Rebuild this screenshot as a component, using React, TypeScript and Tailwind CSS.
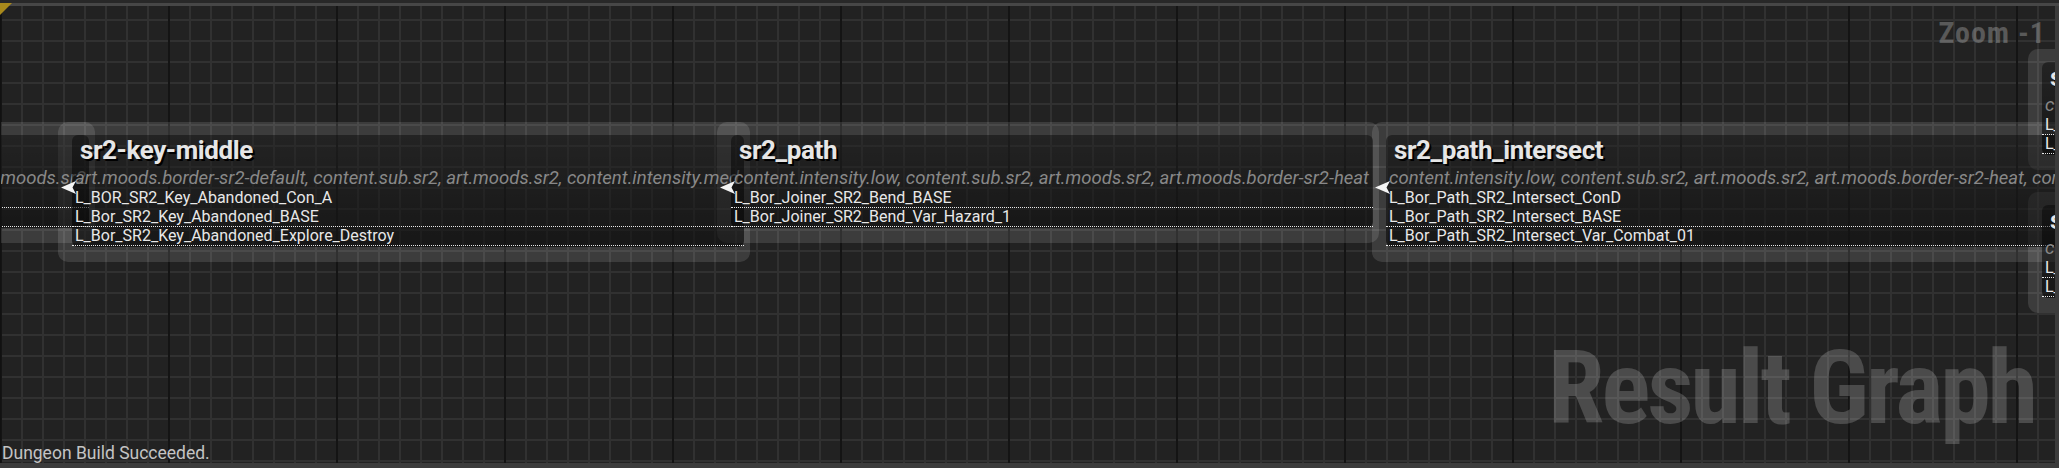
import React from "react";

type Item = { t: string; d: boolean };
type NodeData = {
  pos: string;
  title: string;
  subtitle: string;
  alignEnd?: boolean;
  pin: boolean;
  items: Item[];
};

const nodes: NodeData[] = [
  {
    pos: "left-[-401px] top-[116px] w-[495px]",
    title: "sr2-key-start",
    subtitle: "content.intensity.low, content.sub.sr2, art.moods.sr2",
    alignEnd: true,
    pin: true,
    items: [
      { t: "L_Bor_SR2_Key_Start", d: true },
      { t: "L_Bor_SR2_Key_Start_B", d: true },
    ],
  },
  {
    pos: "left-[57px] top-[116px] w-[692px]",
    title: "sr2-key-middle",
    subtitle:
      "art.moods.border-sr2-default, content.sub.sr2, art.moods.sr2, content.intensity.med",
    pin: true,
    items: [
      { t: "L_BOR_SR2_Key_Abandoned_Con_A", d: false },
      { t: "L_Bor_SR2_Key_Abandoned_BASE", d: true },
      { t: "L_Bor_SR2_Key_Abandoned_Explore_Destroy", d: true },
    ],
  },
  {
    pos: "left-[716px] top-[116px] w-[662px]",
    title: "sr2_path",
    subtitle:
      "content.intensity.low, content.sub.sr2, art.moods.sr2, art.moods.border-sr2-heat",
    pin: true,
    items: [
      { t: "L_Bor_Joiner_SR2_Bend_BASE", d: true },
      { t: "L_Bor_Joiner_SR2_Bend_Var_Hazard_1", d: true },
    ],
  },
  {
    pos: "left-[1371px] top-[116px] w-[800px]",
    title: "sr2_path_intersect",
    subtitle:
      "content.intensity.low, content.sub.sr2, art.moods.sr2, art.moods.border-sr2-heat, content.sub.sr2",
    pin: true,
    items: [
      { t: "L_Bor_Path_SR2_Intersect_ConD", d: false },
      { t: "L_Bor_Path_SR2_Intersect_BASE", d: true },
      { t: "L_Bor_Path_SR2_Intersect_Var_Combat_01", d: true },
    ],
  },
  {
    pos: "left-[2027px] top-[43px] w-[320px]",
    title: "sr2_path_bend",
    subtitle: "content.intensity.low, content.sub.sr2",
    pin: false,
    items: [
      { t: "L_Bor_Path_SR2_Bend_BASE", d: true },
      { t: "L_Bor_Path_SR2_Bend_Var_01", d: true },
    ],
  },
  {
    pos: "left-[2027px] top-[186px] w-[320px]",
    title: "sr2_path_end",
    subtitle: "content.intensity.low, content.sub.sr2",
    pin: false,
    items: [
      { t: "L_Bor_Path_SR2_End_BASE", d: true },
      { t: "L_Bor_Path_SR2_End_Var_01", d: true },
    ],
  },
];

function Pin() {
  return (
    <svg
      className="absolute left-[-11px] top-[46px] h-[13px] w-[16px]"
      viewBox="0 0 16 13"
    >
      <path d="M0 6.5 L15 0 L11.5 6.5 L15 13 Z" fill="#f4f4f4" />
    </svg>
  );
}

function GraphNode({ n, layer }: { n: NodeData; layer: "frame" | "body" }) {
  const isFrame = layer === "frame";
  return (
    <div
      className={`absolute ${n.pos} rounded-[10px] pb-[15px] pl-[14px] pr-[6px] pt-[13px] ${
        isFrame ? "bg-white/[0.12]" : "bg-transparent"
      }`}
    >
      <div
        className={`relative rounded-[6px] bg-[linear-gradient(180deg,rgba(0,0,0,0.42),rgba(0,0,0,0.62))] pb-[1px] pt-[2px] ${
          isFrame ? "invisible" : "visible"
        }`}
      >
        <div className="h-[27px] whitespace-nowrap pl-[8px] text-[26px] font-bold leading-[27px] tracking-[-0.4px] text-[#e6e6e6] [text-shadow:2px_2px_0_#000]">
          {n.title}
        </div>
        <div
          className={`mt-[4px] flex h-[20px] overflow-hidden whitespace-nowrap px-[3px] text-[18.5px] italic leading-[20px] text-[#888888] ${
            n.alignEnd ? "justify-end" : "justify-start"
          }`}
        >
          <span className="shrink-0">{n.subtitle}</span>
        </div>
        <div className="mt-[1px]">
          {n.items.map((it, i) => (
            <div
              key={i}
              className={`h-[19px] overflow-hidden whitespace-nowrap pl-[3px] text-[16px] leading-[18px] text-[#e8e8e8] ${
                it.d ? "border-b border-dotted border-white/90" : ""
              }`}
            >
              {it.t}
            </div>
          ))}
        </div>
        {n.pin ? <Pin /> : null}
      </div>
    </div>
  );
}

export default function App() {
  return (
    <div className="relative flex h-[468px] w-[2059px] flex-col overflow-hidden bg-[#2a2a2a] font-[family-name:Roboto,sans-serif]">
      <div className="h-[3px] shrink-0 bg-[#282828]" />
      <div className="h-[3px] shrink-0 bg-[#474747]" />
      <div className="flex min-h-0 flex-1">
        <div className="w-[1px] shrink-0 bg-[#111111]" />
        <div className="relative flex-1 overflow-hidden bg-[#222222] bg-[linear-gradient(90deg,#141414_2px,transparent_2px),linear-gradient(90deg,#313131_2px,transparent_2px),linear-gradient(180deg,#313131_2px,transparent_2px)] bg-[size:168px_100%,21px_100%,100%_21px] bg-[position:167px_0,20px_0,0_13px]">
          {nodes.map((n, i) => (
            <GraphNode key={`f${i}`} n={n} layer="frame" />
          ))}
          {nodes.map((n, i) => (
            <GraphNode key={`b${i}`} n={n} layer="body" />
          ))}
          <div className="absolute right-[9px] top-[12px] whitespace-nowrap font-[family-name:'Roboto_Condensed',Roboto,sans-serif] text-[30px] font-bold leading-[30px] tracking-[1px] text-white/25 [font-stretch:75%]">
            Zoom -1
          </div>
          <div className="absolute right-[20px] top-[331px] whitespace-nowrap font-[family-name:'Roboto_Condensed',Roboto,sans-serif] text-[102px] font-bold leading-[102px] tracking-[-3px] text-white/[0.19] [font-stretch:75%]">
            Result Graph
          </div>
          <div className="absolute bottom-0 left-[1px] whitespace-nowrap text-[17.5px] leading-[20px] text-[#c4c4c4]">
            Dungeon Build Succeeded.
          </div>
        </div>
        <div className="w-[4px] shrink-0 bg-[#3c3c3c]" />
      </div>
      <div className="h-[5px] shrink-0 bg-[#3c3c3c]" />
      <svg className="absolute left-0 top-[3px] h-[12px] w-[12px]" viewBox="0 0 12 12">
        <path d="M0 0 L12 0 L0 12 Z" fill="#a98a1c" />
      </svg>
    </div>
  );
}
